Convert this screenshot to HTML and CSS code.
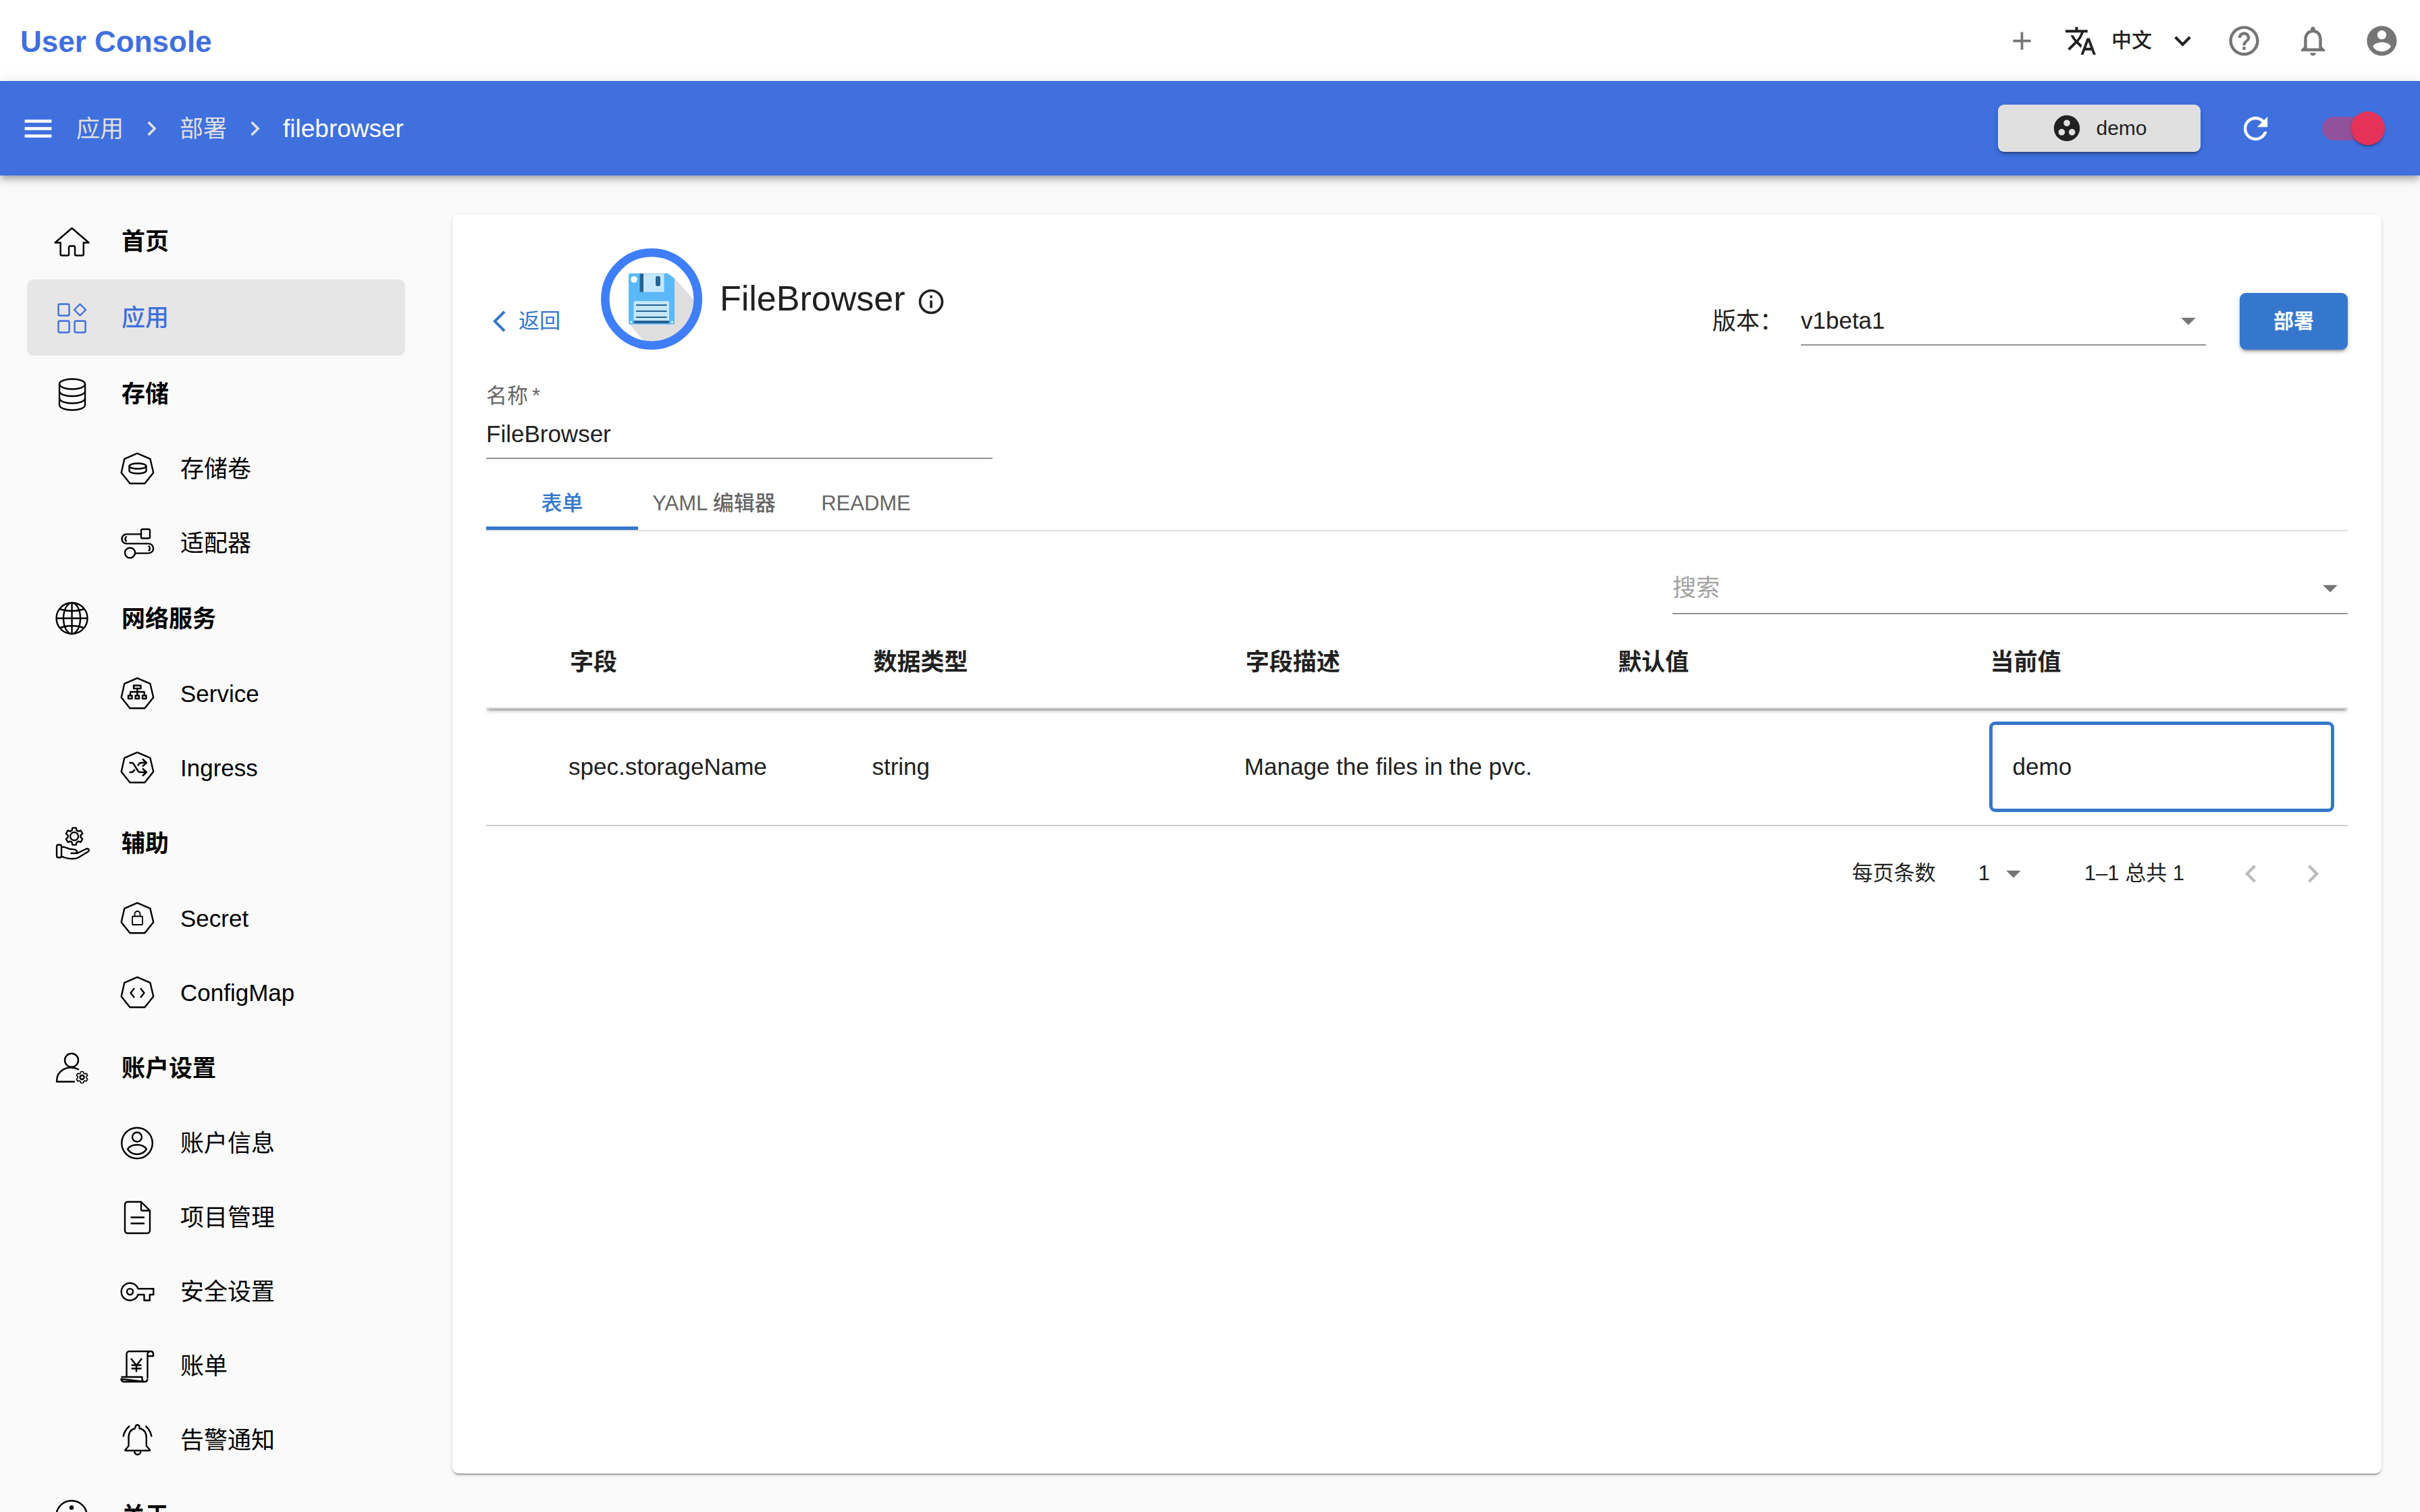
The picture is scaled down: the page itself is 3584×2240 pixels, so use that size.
FILE: index.html
```html
<!DOCTYPE html>
<html lang="zh-CN">
<head>
<meta charset="utf-8">
<meta name="viewport" content="width=device-width, initial-scale=1">
<title>User Console</title>
<link rel="stylesheet" href="styles.css">
</head>
<body>
<svg class="sprite" aria-hidden="true">
  <symbol id="i-heptagon" viewBox="0 0 52 52"><path d="M26.3 2.6 45.4 10.8 50.2 31.3 37.4 47.2H15.4L2.7 31.3 7.3 10.8z"/></symbol>
  <symbol id="i-gear" viewBox="-14 -14 28 28"><path d="M-3.6-8.8-2.6-12.6H2.6L3.6-8.8 5.8-7.5 9.6-8.5 12.2-4 9.4-1.3V1.3L12.2 4 9.6 8.5 5.8 7.5 3.6 8.8 2.6 12.6H-2.6L-3.6 8.8-5.8 7.5-9.6 8.5-12.2 4-9.4 1.3V-1.3L-12.2-4-9.6-8.5-5.8-7.5z"/></symbol>
  <symbol id="i-drop" viewBox="0 0 24 24"><path d="M7 10l5 5 5-5z"/></symbol>
  <symbol id="i-right" viewBox="0 0 24 24"><path d="M10 6 8.59 7.41 13.17 12l-4.58 4.59L10 18l6-6z"/></symbol>
  <symbol id="i-left" viewBox="0 0 24 24"><path d="M15.41 7.41 14 6l-6 6 6 6 1.41-1.41L10.83 12z"/></symbol>
</svg>

<div class="app">
  <header class="topbar">
    <a class="brand" href="#">User Console</a>
    <div class="topbar-tools">
      <button class="icon-btn add" type="button" aria-label="新建"><svg viewBox="0 0 24 24"><path d="M19 13h-6v6h-2v-6H5v-2h6V5h2v6h6z"/></svg></button>
      <button class="lang" type="button">
        <svg viewBox="0 0 24 24"><path d="M12.87 15.07l-2.54-2.51.03-.03c1.74-1.94 2.98-4.17 3.71-6.53H17V4h-7V2H8v2H1v1.99h11.17C11.5 7.92 10.44 9.75 9 11.35 8.07 10.32 7.3 9.19 6.69 8h-2c.73 1.63 1.73 3.17 2.98 4.56l-5.09 5.02L4 19l5-5 3.11 3.11.76-2.04zM18.5 10h-2L12 22h2l1.12-3h4.75L21 22h2l-4.5-12zm-2.62 7l1.62-4.33L19.12 17h-3.24z"/></svg>
        <span>中文</span>
        <svg viewBox="0 0 24 24"><path d="M16.59 8.59 12 13.17 7.41 8.59 6 10l6 6 6-6z"/></svg>
      </button>
      <div class="topbar-icons">
        <button class="icon-btn" type="button" aria-label="帮助"><svg viewBox="0 0 24 24"><path d="M11 18h2v-2h-2v2zm1-16C6.48 2 2 6.48 2 12s4.48 10 10 10 10-4.48 10-10S17.52 2 12 2zm0 18c-4.41 0-8-3.59-8-8s3.59-8 8-8 8 3.59 8 8-3.59 8-8 8zm0-14c-2.21 0-4 1.79-4 4h2c0-1.1.9-2 2-2s2 .9 2 2c0 2-3 1.75-3 5h2c0-2.25 3-2.5 3-5 0-2.21-1.79-4-4-4z"/></svg></button>
        <button class="icon-btn" type="button" aria-label="通知"><svg viewBox="0 0 24 24"><path d="M12 22c1.1 0 2-.9 2-2h-4c0 1.1.9 2 2 2zm6-6v-5c0-3.07-1.63-5.64-4.5-6.32V4c0-.83-.67-1.5-1.5-1.5s-1.5.67-1.5 1.5v.68C7.64 5.36 6 7.92 6 11v5l-2 2v1h16v-1l-2-2zm-2 1H8v-6c0-2.48 1.51-4.5 4-4.5s4 2.02 4 4.5v6z"/></svg></button>
        <button class="icon-btn" type="button" aria-label="账户"><svg viewBox="0 0 24 24"><path d="M12 2C6.48 2 2 6.48 2 12s4.48 10 10 10 10-4.48 10-10S17.52 2 12 2zm0 3c1.66 0 3 1.34 3 3s-1.34 3-3 3-3-1.34-3-3 1.34-3 3-3zm0 14.2c-2.5 0-4.71-1.28-6-3.22.03-1.99 4-3.08 6-3.08 1.99 0 5.97 1.09 6 3.08-1.29 1.94-3.5 3.22-6 3.22z"/></svg></button>
      </div>
    </div>
  </header>

  <div class="appbar">
    <button class="icon-btn" type="button" aria-label="菜单"><svg viewBox="0 0 24 24"><path d="M3 18h18v-2H3v2zm0-5h18v-2H3v2zm0-7v2h18V6H3z"/></svg></button>
    <nav class="crumbs" aria-label="路径">
      <a href="#">应用</a>
      <svg><use href="#i-right"/></svg>
      <a href="#">部署</a>
      <svg><use href="#i-right"/></svg>
      <a class="current" href="#">filebrowser</a>
    </nav>
    <button class="tenant" type="button">
      <svg viewBox="0 0 24 24"><path d="M12 2C6.48 2 2 6.48 2 12s4.48 10 10 10 10-4.48 10-10S17.52 2 12 2zM8 17.5c-1.38 0-2.5-1.12-2.5-2.5s1.12-2.5 2.5-2.5 2.5 1.12 2.5 2.5-1.12 2.5-2.5 2.5zM9.5 8c0-1.38 1.12-2.5 2.5-2.5s2.5 1.12 2.5 2.5-1.12 2.5-2.5 2.5S9.5 9.38 9.5 8zm6.5 9.5c-1.38 0-2.5-1.12-2.5-2.5s1.12-2.5 2.5-2.5 2.5 1.12 2.5 2.5-1.12 2.5-2.5 2.5z"/></svg>
      <span>demo</span>
    </button>
    <button class="icon-btn refresh" type="button" aria-label="刷新"><svg viewBox="0 0 24 24"><path d="M17.65 6.35C16.2 4.9 14.21 4 12 4c-4.42 0-7.99 3.58-7.99 8s3.57 8 7.99 8c3.73 0 6.84-2.55 7.73-6h-2.08c-.82 2.33-3.04 4-5.65 4-3.31 0-6-2.69-6-6s2.69-6 6-6c1.66 0 3.14.69 4.22 1.78L13 11h7V4l-2.35 2.35z"/></svg></button>
    <input class="switch" type="checkbox" aria-label="自动刷新" checked>
  </div>

  <div class="body">
    <nav class="sidebar" aria-label="导航">
      <a class="item" href="#"><svg viewBox="0 0 52 52"><path d="M26.5 6 1.5 27.5H9.6V44.5a2 2 0 0 0 2 2H20a2 2 0 0 0 2-2V34.5a2 2 0 0 1 2-2h5a2 2 0 0 1 2 2V44.5a2 2 0 0 0 2 2h8.7a2 2 0 0 0 2-2V27.5H51.5z"/></svg>首页</a>
      <a class="item active" href="#" aria-current="page"><svg viewBox="0 0 52 52"><rect x="6.5" y="5.5" width="16" height="17" rx="2"/><rect x="6.5" y="30.5" width="16" height="17" rx="2"/><rect x="30.5" y="30.5" width="16" height="17" rx="2"/><path d="M38.500 5.500 47 14l-8.500 8.500L30 14z"/></svg>应用</a>
      <a class="item" href="#"><svg viewBox="0 0 52 52"><ellipse cx="27" cy="11" rx="19" ry="7.5"/><path d="M8 11V42A19 7.5 0 0 0 46 42V11M8 21.5A19 7.5 0 0 0 46 21.5M8 32A19 7.5 0 0 0 46 32"/></svg>存储</a>
      <a class="item sub" href="#"><svg viewBox="0 0 52 52"><use href="#i-heptagon"/><ellipse cx="27" cy="21.5" rx="12.5" ry="4"/><path d="M14.5 21.5V28.5A12.5 4 0 0 0 39.5 28.5V21.5"/></svg>存储卷</a>
      <a class="item sub" href="#"><svg viewBox="0 0 52 52"><rect x="32" y="5" width="13" height="13.5" rx="2"/><path d="M32 12.4H10.5a7 7 0 0 0 0 14H43a7 7 0 0 1 0 14.2H23.5M10.5 15.5q-4 4 0 8M43 29.5q4 4 0 8"/><circle cx="15.5" cy="40" r="7.5"/></svg>适配器</a>
      <a class="item" href="#"><svg viewBox="0 0 52 52"><circle cx="26.5" cy="25" r="23"/><ellipse cx="26.5" cy="25" rx="12.5" ry="23"/><path d="M26.5 2V48M3.5 25H49.5M9 11.5Q26.5 17 44 11.5M9 39Q26.5 33 44 39"/></svg>网络服务</a>
      <a class="item sub" href="#"><svg viewBox="0 0 52 52"><use href="#i-heptagon"/><path d="M21 13.5H31.5V18H21zM26.3 18V28M16 28V23H36.7V28M13 28.5H18.5V33H13zM23.5 28.5H29V33H23.5zM34 28.5H39.5V33H34z"/></svg>Service</a>
      <a class="item sub" href="#"><svg viewBox="0 0 52 52"><use href="#i-heptagon"/><path d="M14.5 18H18Q20 18 21 20L27.5 30.5Q28.5 32 31 32H40M14.5 32H18Q20 32 22.5 28M27 22.5Q29.5 18 32 18H40M34 12.5 40 18 34 23.5M34 26.5 40 32 34 37.5"/></svg>Ingress</a>
      <a class="item" href="#"><svg viewBox="0 0 52 52"><use href="#i-gear" x="16" y="1" width="28" height="28"/><circle cx="30" cy="15" r="6"/><rect x="4" y="27.5" width="7" height="19" rx="2.5"/><path d="M11 31C17 29.5 19 33.5 25 34 31 34.5 34 34 34.5 40H24.5M34.5 40 48 33.5C51.5 32.5 53 36 50 38L36 46.5C30 49.5 18 48.5 11 44.5"/></svg>辅助</a>
      <a class="item sub" href="#"><svg viewBox="0 0 52 52"><use href="#i-heptagon"/><g class="thin"><rect x="19" y="22.5" width="15" height="12.5" rx="1"/><path d="M22.5 22.5V19a4 4 0 0 1 8 0V22.5"/></g></svg>Secret</a>
      <a class="item sub" href="#"><svg viewBox="0 0 52 52"><use href="#i-heptagon"/><path d="M22 19 16.5 26 22 33M31 19 36.5 26 31 33"/></svg>ConfigMap</a>
      <a class="item" href="#"><svg viewBox="0 0 52 52"><circle cx="26" cy="13.7" r="10"/><path d="M37 27.5C21 20 3.5 28 4 45.5H31"/><use href="#i-gear" x="32" y="29.5" width="19" height="19"/><circle cx="41.5" cy="39" r="3"/></svg>账户设置</a>
      <a class="item sub" href="#"><svg viewBox="0 0 52 52"><circle cx="26" cy="25.5" r="22.8"/><circle cx="26" cy="16.5" r="7"/><path d="M12 34.5C15 29.5 21 28 26 28S37 29.5 40 34.5C37 39 32 42 26 42S15 39 12 34.5z"/></svg>账户信息</a>
      <a class="item sub" href="#"><svg viewBox="0 0 52 52"><path d="M32 2.5H12a4 4 0 0 0-4 4V45a4 4 0 0 0 4 4H41a4 4 0 0 0 4-4V15.5zM32 2.5V13.5a2 2 0 0 0 2 2H45M16.5 25.5H37M16.5 34.5H37"/></svg>项目管理</a>
      <a class="item sub" href="#"><svg viewBox="0 0 52 52"><path d="M27.5 21.3H50.3V30H44.8V38.5H36.5V30H27.5A12.8 12.8 0 1 1 27.5 21.3z"/><circle cx="15.5" cy="25.6" r="4.5"/></svg>安全设置</a>
      <a class="item sub" href="#"><svg viewBox="0 0 52 52"><path d="M10.5 41.5V8a4 4 0 0 1 4-4H46M41.5 44.5V8Q42 4 46 4T50 8V11H41.5M2.5 42H33.5V45Q34 49 37.5 49T41.5 45M37.5 49H6.5Q2.5 49 2.5 45zM17 14.5 25 25 33 14.5M25 25V34.5M17.5 24.5H32.5M17.5 29.5H32.5"/></svg>账单</a>
      <a class="item sub" href="#"><svg viewBox="0 0 52 52"><path d="M23.5 8V6a3 3 0 0 1 6 0V8C36 9.5 39.8 14 39.8 22V34L45 40V41H8.5V40L13.5 34V22C13.5 14 17 9.5 23.5 8M22 41.5a4.7 5.5 0 0 0 9.4 0M15 4.5Q7 11 5.5 20.5M38.5 4.5Q46 11 47.5 20.5"/></svg>告警通知</a>
      <a class="item" href="#"><svg viewBox="0 0 52 52"><circle cx="26" cy="26" r="22.8"/><path d="M22 22H27V38M21 38H33"/><circle class="dot" cx="26" cy="13.5" r="2"/></svg>关于</a>
    </nav>

    <main class="main">
      <section class="card">
        <div class="card-head">
          <button class="back" type="button"><svg viewBox="0 0 24 24"><path d="M11.67 3.87 9.9 2.1 0 12l9.9 9.9 1.77-1.77L3.54 12z"/></svg>返回</button>
          <div class="product">
            <svg class="product-logo" viewBox="0 0 150 150" aria-hidden="true">
              <defs><clipPath id="disc"><circle cx="75" cy="75" r="64"/></clipPath></defs>
              <path clip-path="url(#disc)" fill="#dedede" d="M109 44 150 90V150H74L42 112z"/>
              <circle cx="75" cy="75" r="68.7" fill="none" stroke="#3f7ef9" stroke-width="12.6"/>
              <path fill="#5bb9f8" d="M43 37H99L109 44.5V110.5a2 2 0 0 1-2 2H43a2 2 0 0 1-2-2V39a2 2 0 0 1 2-2z"/>
              <path fill="#266294" d="M57.5 37.5H64V64.5H57.5zM49 107H101V111H49z"/>
              <path fill="#c5e7fd" d="M63 37.5H93.5V64.5H63zM48.5 80a2 2 0 0 1 2-2H99a2 2 0 0 1 2 2V107H48.5z"/>
              <rect x="81" y="41" width="7" height="15" rx="3" fill="#266294"/>
              <path stroke="#266294" stroke-width="2" d="M52 84H97.5M52 93H97.5M52 102H97.5"/>
              <circle cx="49" cy="46" r="4.8" fill="#fff"/>
              <circle cx="44.5" cy="109" r="1.5" fill="#fff"/><circle cx="105.3" cy="109" r="1.5" fill="#fff"/>
            </svg>
            <h1>FileBrowser</h1>
            <svg class="info" viewBox="0 0 24 24"><path d="M11 7h2v2h-2zm0 4h2v6h-2zm1-9C6.48 2 2 6.48 2 12s4.48 10 10 10 10-4.48 10-10S17.52 2 12 2zm0 18c-4.41 0-8-3.59-8-8s3.59-8 8-8 8 3.59 8 8-3.59 8-8 8z"/></svg>
          </div>
          <div class="version">
            <label for="version">版本：</label>
            <div class="select-box version-box">
              <select id="version"><option>v1beta1</option></select>
              <svg><use href="#i-drop"/></svg>
            </div>
          </div>
          <button class="deploy" type="button">部署</button>
        </div>

        <div class="field">
          <label for="name">名称<span class="required">*</span></label>
          <input id="name" type="text" value="FileBrowser">
        </div>

        <div class="tabs" role="tablist">
          <button class="tab selected" role="tab" aria-selected="true" type="button">表单</button>
          <button class="tab" role="tab" aria-selected="false" type="button">YAML 编辑器</button>
          <button class="tab" role="tab" aria-selected="false" type="button">README</button>
        </div>

        <div class="select-box search-box">
          <input type="text" placeholder="搜索" aria-label="搜索">
          <svg><use href="#i-drop"/></svg>
        </div>

        <div class="table-wrap">
          <table>
            <colgroup><col class="col-lead"><col><col class="col-fifth"><col class="col-fifth"><col class="col-fifth"><col class="col-fifth"></colgroup>
            <thead>
              <tr><th></th><th scope="col">字段</th><th scope="col">数据类型</th><th scope="col">字段描述</th><th scope="col">默认值</th><th scope="col">当前值</th></tr>
            </thead>
            <tbody>
              <tr><td></td><td>spec.storageName</td><td>string</td><td>Manage the files in the pvc.</td><td></td><td><input class="value" type="text" value="demo" aria-label="当前值"></td></tr>
            </tbody>
          </table>
        </div>

        <div class="pager">
          <label for="rows">每页条数</label>
          <div class="select-box rows-box">
            <select id="rows"><option>1</option></select>
            <svg><use href="#i-drop"/></svg>
          </div>
          <span class="range">1–1 总共 1</span>
          <button type="button" aria-label="上一页" disabled><svg><use href="#i-left"/></svg></button>
          <button type="button" aria-label="下一页" disabled><svg><use href="#i-right"/></svg></button>
        </div>
      </section>
    </main>
  </div>
</div>
</body>
</html>
```
FILE: styles.css
```css
:root {
  --bar: #3f70de;
  --primary: #3577cc;
  --text: #212121;
  --muted: #666;
  --icon: #757575;
  --line: #949494;
}

* { box-sizing: border-box; }

body {
  margin: 0;
  background: #fafafa;
  color: var(--text);
  font-family: "Liberation Sans", "Noto Sans CJK SC", sans-serif;
  font-size: 35px;
  line-height: 52px;
}

button, input, select {
  margin: 0;
  padding: 0;
  border: 0;
  outline: 0;
  background: none;
  color: inherit;
  font: inherit;
}

a { color: inherit; text-decoration: none; }
svg { display: block; flex: none; }
.sprite { position: absolute; width: 0; height: 0; }

.app {
  display: flex;
  flex-direction: column;
  height: 100vh;
  overflow: hidden;
}

.icon-btn svg { width: 53px; height: 53px; fill: currentColor; }

/* Top bar */
.topbar {
  display: flex;
  flex: none;
  align-items: center;
  justify-content: space-between;
  height: 120px;
  padding: 0 30px;
  background: #fff;
}

.brand { padding-top: 3px; color: var(--bar); font-size: 44px; font-weight: 700; }

.topbar-tools { display: flex; align-items: center; gap: 40px; }
.topbar-icons { display: flex; gap: 49px; }
.topbar-tools .icon-btn { color: var(--icon); }
.add svg { width: 45px; height: 45px; }

.lang { display: flex; align-items: center; gap: 21px; font-size: 30px; font-weight: 500; }
.lang svg { width: 49px; height: 49px; fill: currentColor; }

/* Breadcrumb bar */
.appbar {
  position: relative;
  z-index: 1;
  display: flex;
  flex: none;
  align-items: center;
  height: 140px;
  padding: 0 52px 0 30px;
  background: var(--bar);
  color: #fff;
  box-shadow: 0 4px 8px -2px rgba(0, 0, 0, .2), 0 8px 10px rgba(0, 0, 0, .14), 0 2px 20px rgba(0, 0, 0, .12);
}

.crumbs {
  display: flex;
  flex: 1;
  align-items: center;
  gap: 20px;
  padding-left: 30px;
  color: #e0e0e0;
}

.crumbs a { padding-top: 2px; }
.crumbs svg { width: 43px; height: 43px; fill: currentColor; }
.crumbs .current { color: #fff; font-size: 37px; }

.tenant {
  display: flex;
  align-items: center;
  justify-content: center;
  gap: 20px;
  width: 300px;
  height: 70px;
  border-radius: 9px;
  background: #e0e0e0;
  color: var(--text);
  font-size: 30px;
  box-shadow: 0 6px 2px -4px rgba(0, 0, 0, .2), 0 4px 4px rgba(0, 0, 0, .14), 0 2px 10px rgba(0, 0, 0, .12);
}

.tenant svg { width: 46px; height: 46px; fill: currentColor; }
.refresh { margin: 0 72px 0 55px; }

.switch {
  display: grid;
  align-items: center;
  width: 93px;
  height: 50px;
  appearance: none;
}

.switch::before, .switch::after { content: ""; grid-area: 1 / 1; }
.switch::before { width: 80px; height: 35px; border-radius: 18px; background: #91519b; }

.switch::after {
  justify-self: end;
  width: 50px;
  height: 50px;
  border-radius: 50%;
  background: #e53258;
  box-shadow: 0 4px 2px -2px rgba(0, 0, 0, .2), 0 2px 2px rgba(0, 0, 0, .14), 0 2px 6px rgba(0, 0, 0, .12);
}

/* Sidebar */
.body { display: flex; flex: 1; min-height: 0; }

.sidebar {
  display: flex;
  flex: none;
  flex-direction: column;
  width: 600px;
  padding: 41px 0 0 40px;
  overflow: hidden;
  color: #000;
}

.item {
  display: flex;
  flex: none;
  align-items: center;
  gap: 48px;
  height: 113px;
  padding-left: 40px;
  border-radius: 10px;
  font-weight: 700;
}

.item svg {
  width: 52px;
  height: 52px;
  overflow: visible;
  fill: none;
  stroke: currentColor;
  stroke-width: 2.4;
  stroke-linejoin: round;
}

.item .thin { stroke-width: 1.8; }
.item .dot { fill: currentColor; }
.item.active { background: #e6e6e6; color: var(--bar); font-weight: 500; }
.item.sub { gap: 38px; height: 110px; padding-left: 137px; font-weight: 400; }

/* Card */
.main {
  display: flex;
  flex: 1;
  min-width: 0;
  padding: 58px 57px 57px 70px;
}

.card {
  flex: 1;
  min-width: 0;
  padding: 50px;
  border-radius: 9px;
  background: #fff;
  box-shadow: 0 4px 2px -2px rgba(0, 0, 0, .2), 0 2px 2px rgba(0, 0, 0, .14), 0 2px 6px rgba(0, 0, 0, .12);
}

.card-head { display: flex; align-items: flex-end; gap: 50px; }

.back {
  display: flex;
  align-items: center;
  width: 120px;
  height: 84px;
  padding-left: 10px;
  color: var(--primary);
  font-size: 31px;
  white-space: nowrap;
}

.back svg { width: 38px; height: 38px; fill: currentColor; }

.product { display: flex; flex: 1; align-items: center; }
.product-logo { width: 150px; height: 150px; }
.product h1 { margin: 0 16px 2px 26px; font-size: 52px; font-weight: 400; line-height: 72px; }
.info { width: 44px; height: 44px; margin-top: 8px; fill: currentColor; }

.version { display: flex; align-items: center; gap: 26px; height: 84px; }

.select-box { display: grid; align-items: center; border-bottom: 2px solid var(--line); }
.select-box > * { grid-area: 1 / 1; }
.select-box select, .select-box input { width: 100%; height: 100%; appearance: none; }
.select-box svg { justify-self: end; width: 52px; height: 52px; fill: var(--icon); pointer-events: none; }
.version-box { width: 600px; height: 72px; }

.deploy {
  width: 160px;
  height: 84px;
  border-radius: 9px;
  background: var(--primary);
  color: #fff;
  font-size: 30px;
  font-weight: 700;
  box-shadow: 0 6px 2px -4px rgba(0, 0, 0, .2), 0 4px 4px rgba(0, 0, 0, .14), 0 2px 10px rgba(0, 0, 0, .12);
}

.field { display: flex; flex-direction: column; width: 750px; margin-top: 48px; }
.field label { color: var(--muted); font-size: 31px; line-height: 42px; }
.required { padding-left: 6px; }
.field input { height: 72px; border-bottom: 2px solid var(--line); }

.tabs { display: flex; margin-top: 25px; border-bottom: 2px solid #e0e0e0; }

.tab {
  width: 225px;
  height: 80px;
  padding-top: 2px;
  color: var(--muted);
  font-size: 31px;
  font-weight: 500;
}

.tab.selected { color: var(--primary); box-shadow: inset 0 -5px var(--primary); }

.search-box { width: 1000px; height: 76px; margin: 47px 0 0 auto; }
.search-box input::placeholder { color: #a2a2a2; }

/* Table */
.table-wrap { overflow: hidden; }
table { width: 100%; table-layout: fixed; border-spacing: 0; }
.col-lead { width: 102px; }
.col-fifth { width: 20%; }

thead {
  position: relative;
  box-shadow: 0 6px 2px -4px rgba(0, 0, 0, .2), 0 4px 4px rgba(0, 0, 0, .14), 0 2px 10px rgba(0, 0, 0, .12);
}

th, td { padding: 0 20px; text-align: left; }
th { height: 140px; padding: 3px 22px 0; border-bottom: 2px solid #ddd; font-weight: 700; }
td { height: 174px; border-bottom: 2px solid #ccc; }

.value {
  width: 100%;
  height: 134px;
  padding: 0 30px;
  border: 5px solid var(--primary);
  border-radius: 9px;
}

/* Pagination */
.pager {
  display: flex;
  align-items: center;
  justify-content: flex-end;
  height: 140px;
  padding-right: 6px;
  font-size: 31px;
}

.rows-box { width: 78px; margin: 0 79px 0 63px; border: 0; }
.range { margin-right: 52px; }

.pager button {
  display: grid;
  place-items: center;
  width: 92px;
  height: 92px;
  color: #bdbdbd;
}

.pager button svg { width: 53px; height: 53px; fill: currentColor; }
```
